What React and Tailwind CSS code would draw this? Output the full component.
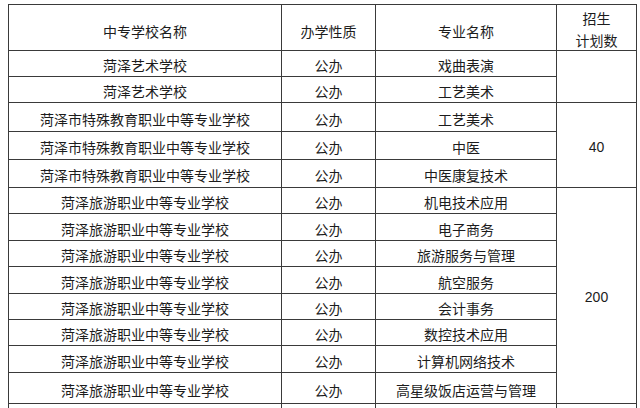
const rows = [
    ['菏泽艺术学校', '公办', '戏曲表演'],
    ['菏泽艺术学校', '公办', '工艺美术'],
    ['菏泽市特殊教育职业中等专业学校', '公办', '工艺美术'],
    ['菏泽市特殊教育职业中等专业学校', '公办', '中医'],
    ['菏泽市特殊教育职业中等专业学校', '公办', '中医康复技术'],
    ['菏泽旅游职业中等专业学校', '公办', '机电技术应用'],
    ['菏泽旅游职业中等专业学校', '公办', '电子商务'],
    ['菏泽旅游职业中等专业学校', '公办', '旅游服务与管理'],
    ['菏泽旅游职业中等专业学校', '公办', '航空服务'],
    ['菏泽旅游职业中等专业学校', '公办', '会计事务'],
    ['菏泽旅游职业中等专业学校', '公办', '数控技术应用'],
    ['菏泽旅游职业中等专业学校', '公办', '计算机网络技术'],
    ['菏泽旅游职业中等专业学校', '公办', '高星级饭店运营与管理'],
];

// quota cells keyed by the row they start on
const quotas = {
    0: { span: 'row-span-2', value: '' },
    2: { span: 'row-span-3', value: '40' },
    5: { span: 'row-span-8', value: '200' },
};

const cell = 'flex items-center justify-center border-r border-b border-[#3a3a3a] pt-[3px]';
const head = 'flex items-center justify-center border-r border-b border-[#3a3a3a] pt-[6px]';

export default function App() {
    return (
        <div
            className="h-[408px] overflow-hidden bg-white pl-[8px] pt-[4px] text-[14px] leading-[20px] text-[#1c1c1c]"
            style={{ fontFamily: '"Noto Sans CJK SC", "Liberation Sans", sans-serif' }}
        >
            <div className="grid w-[629px] grid-cols-[273px_94px_181px_80px] grid-rows-[46px_26px_26px_29px_28px_28px_26px_27px_26px_27px_26px_26px_27px_31px_30px] border-l border-t border-[#3a3a3a]">
                <div className={head}>中专学校名称</div>
                <div className={head}>办学性质</div>
                <div className={head}>专业名称</div>
                <div className={`${cell} flex-col leading-[22px]`}>
                    <span>招生</span>
                    <span>计划数</span>
                </div>

                {rows.map((r, i) => (
                    <>
                        <div key={`a${i}`} className={cell}>{r[0]}</div>
                        <div key={`b${i}`} className={cell}>{r[1]}</div>
                        <div key={`c${i}`} className={cell}>{r[2]}</div>
                        {quotas[i] && (
                            <div
                                key={`d${i}`}
                                className={`${cell} ${quotas[i].span} font-['Liberation_Sans',sans-serif] text-[14px]`}
                            >
                                {quotas[i].value}
                            </div>
                        )}
                    </>
                ))}

                <div className={cell}></div>
                <div className={cell}></div>
                <div className={cell}></div>
                <div className={cell}></div>
            </div>
        </div>
    );
}
